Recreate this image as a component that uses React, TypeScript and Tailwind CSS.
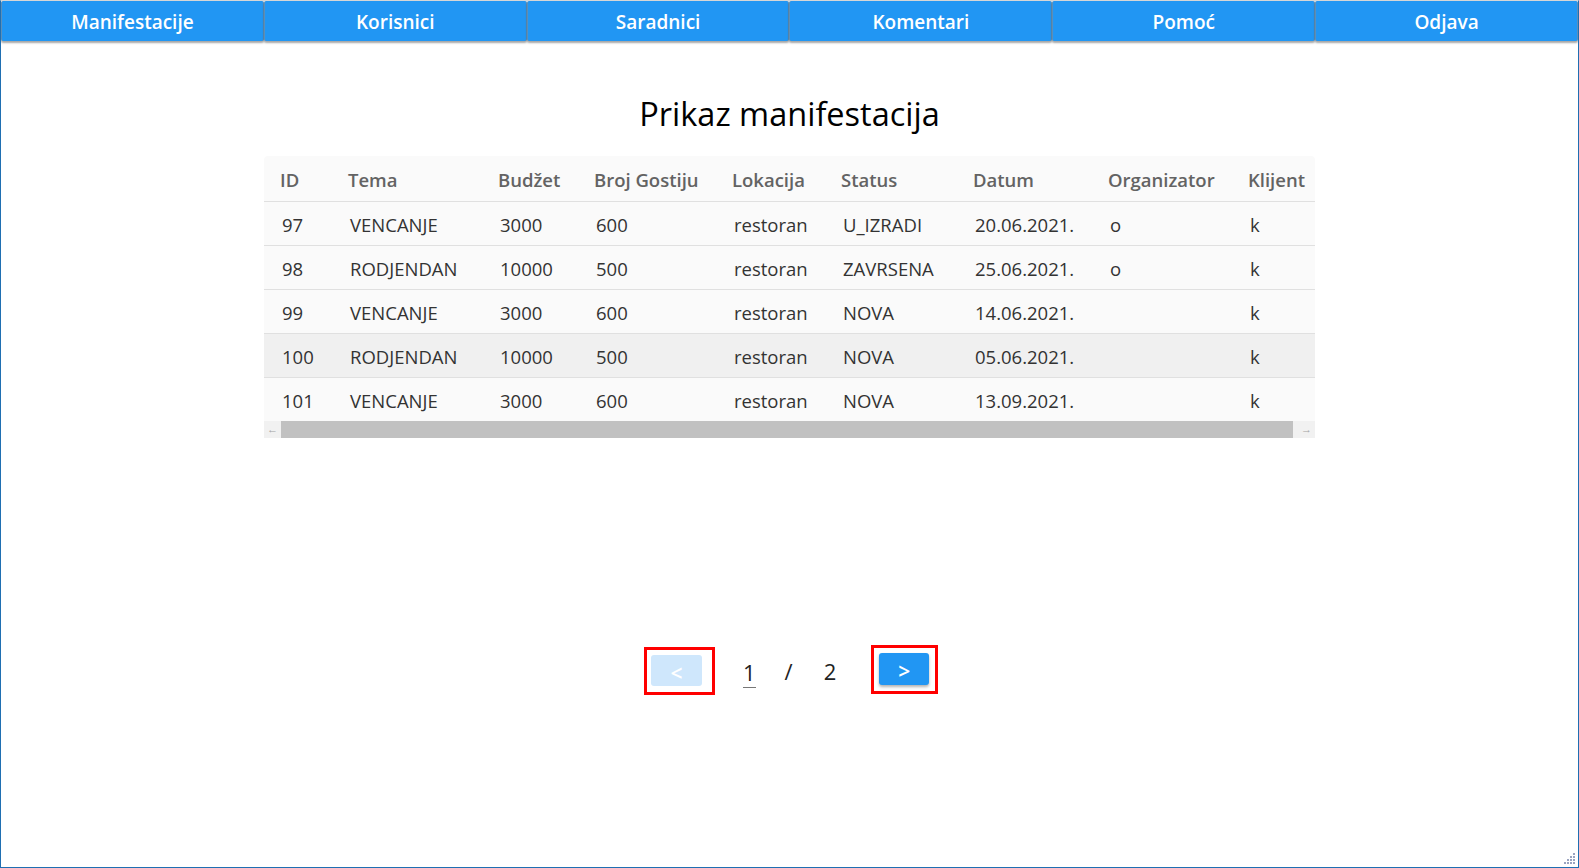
import React from "react";

const font = { fontFamily: '"Open Sans", "Noto Sans", sans-serif' };

const navItems = ["Manifestacije", "Korisnici", "Saradnici", "Komentari", "Pomoć", "Odjava"];

const columns = ["ID", "Tema", "Budžet", "Broj Gostiju", "Lokacija", "Status", "Datum", "Organizator", "Klijent"];

const rows = [
  ["97", "VENCANJE", "3000", "600", "restoran", "U_IZRADI", "20.06.2021.", "o", "k"],
  ["98", "RODJENDAN", "10000", "500", "restoran", "ZAVRSENA", "25.06.2021.", "o", "k"],
  ["99", "VENCANJE", "3000", "600", "restoran", "NOVA", "14.06.2021.", "", "k"],
  ["100", "RODJENDAN", "10000", "500", "restoran", "NOVA", "05.06.2021.", "", "k"],
  ["101", "VENCANJE", "3000", "600", "restoran", "NOVA", "13.09.2021.", "", "k"],
];

const gridCols = "grid grid-cols-[68px_150px_96px_138px_109px_132px_135px_140px_83px]";

const ResizeGrip = () => (
  <svg width="12" height="12" viewBox="0 0 12 12" className="absolute right-[2px] bottom-[2px]">
    {[
      [9, 0],
      [6, 3],
      [9, 3],
      [3, 6],
      [6, 6],
      [9, 6],
      [0, 9],
      [3, 9],
      [6, 9],
      [9, 9],
    ].map(([x, y]) => (
      <rect key={`${x}-${y}`} x={x} y={y} width="2" height="2" fill="#9aa4c0" />
    ))}
  </svg>
);

export default function App() {
  return (
    <div
      className="relative w-[1579px] h-[868px] overflow-hidden bg-white border border-[#1f6fb2] border-t-[#d6d6d6] flex flex-col"
      style={font}
    >
      {/* Nav */}
      <nav className="flex h-[40px] shrink-0">
        {navItems.map((item) => (
          <button
            key={item}
            className="flex-1 h-full pt-[3px] bg-[#2196f3] text-white font-semibold text-[19px] rounded-[2px] border-x border-[#5b8fb9] shadow-[0_2px_2px_rgba(0,0,0,0.35)]"
          >
            {item}
          </button>
        ))}
      </nav>

      <h1 className="mt-[51px] text-center text-[32.5px] text-black leading-[44px]">Prikaz manifestacija</h1>

      {/* Table */}
      <div className="ml-[263px] mt-[20px] w-[1051px] bg-[#fafafa] rounded-[4px]">
        <div className={`${gridCols} h-[46px] items-center pt-[3px] text-[18.5px] font-semibold text-[#636363] border-b border-[#e0e0e0]`}>
          {columns.map((c) => (
            <div key={c} className="pl-[16px] whitespace-nowrap">
              {c}
            </div>
          ))}
        </div>
        {rows.map((r, i) => (
          <div
            key={r[0]}
            className={`${gridCols} h-[44px] items-center pt-[3px] text-[18.5px] text-[#333333] border-b border-[#e0e0e0] ${
              i === 3 ? "bg-[#f0f0f0]" : ""
            }`}
          >
            {r.map((v, j) => (
              <div key={j} className="pl-[18px] whitespace-nowrap">
                {v}
              </div>
            ))}
          </div>
        ))}
        {/* scrollbar */}
        <div className="flex h-[17px] bg-[#f1f1f1] -mt-px">
          <div className="w-[17px] flex items-center justify-center text-[11px] text-[#a3a3a3]">←</div>
          <div className="flex-1 bg-[#c1c1c1] mr-[5px]" />
          <div className="w-[17px] flex items-center justify-center text-[11px] text-[#a3a3a3]">→</div>
        </div>
      </div>

      {/* Pagination */}
      <div className="mt-[209px] flex items-center pl-[643px]">
        <div className="border-[3px] border-[#ff0000] w-[71px] h-[48px] pl-[4px] pt-[5px]">
          <button className="w-[51px] h-[31px] rounded-[3px] bg-[#cfe7fc] text-white text-[21px] font-semibold leading-none pt-[5px]">
            &lt;
          </button>
        </div>
        <div className="ml-[28px] text-[22px] text-[#222] border-b border-[#777] leading-[30px] mt-[3px]">1</div>
        <div className="ml-[29px] text-[22px] text-[#222]">/</div>
        <div className="ml-[31px] text-[22px] text-[#222]">2</div>
        <div className="ml-[35px] border-[3px] border-[#ff0000] w-[67px] h-[49px] pl-[5px] pt-[5px] -mt-[3px]">
          <button className="w-[50px] h-[32px] rounded-[3px] bg-[#2196f3] text-white text-[21px] font-semibold leading-none pt-[5px] shadow-[0_2px_3px_rgba(0,0,0,0.3)]">
            &gt;
          </button>
        </div>
      </div>

      <ResizeGrip />
    </div>
  );
}
